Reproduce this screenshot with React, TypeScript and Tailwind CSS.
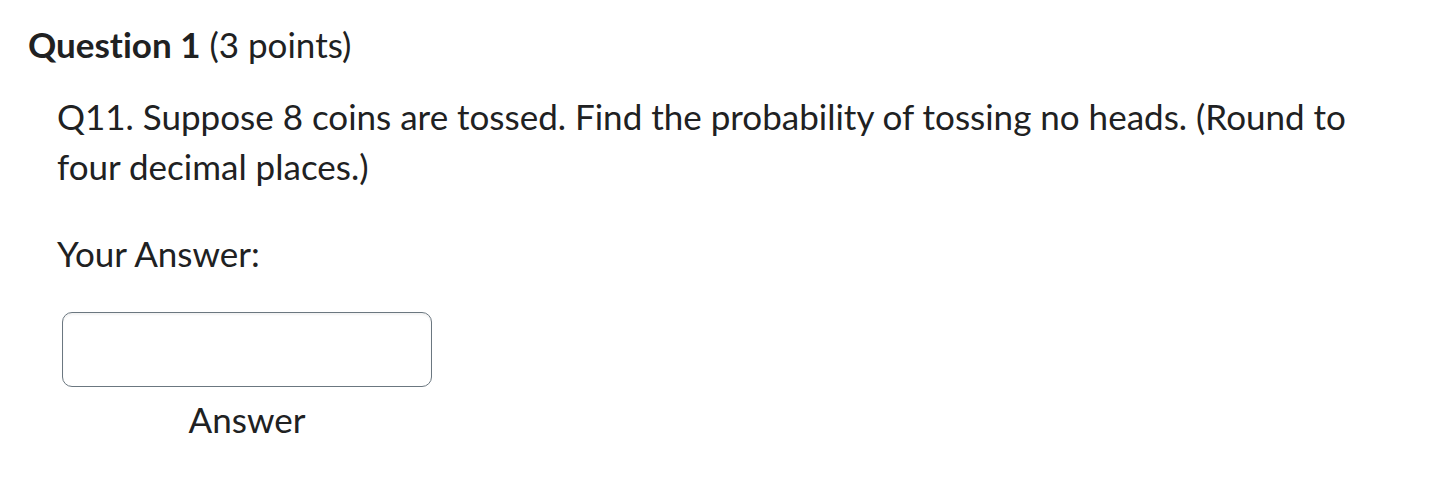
export default function App() {
  return (
    <div className="w-[1434px] h-[486px] bg-white overflow-hidden [font-variant-ligatures:none]" style={{ fontFamily: "Lato, 'Noto Sans', sans-serif" }}>
      <div className="pl-[28px] pt-[23px]">
        <h2 className="text-[35px] leading-[42px] text-[#202122]">
          <span className="font-bold">Question 1</span>
          <span className="font-normal"> (3 points)</span>
        </h2>
        <div className="pl-[29px] pt-[26px] text-[35px] leading-[50px] text-[#202122]">
          <p className="w-[1330px]">Q11. Suppose 8 coins are tossed. Find the probability of tossing no heads. (Round to four decimal places.)</p>
          <p className="mt-[37px]">Your Answer:</p>
          <div className="mt-[34px] ml-[5px] w-[370px] flex flex-col items-center">
            <input className="w-[370px] h-[75px] rounded-[10px] border border-[#6b7780] shadow-[inset_0_2px_2px_rgba(0,0,0,0.05)] outline-none" />
            <div className="mt-[7px]">Answer</div>
          </div>
        </div>
      </div>
    </div>
  );
}
